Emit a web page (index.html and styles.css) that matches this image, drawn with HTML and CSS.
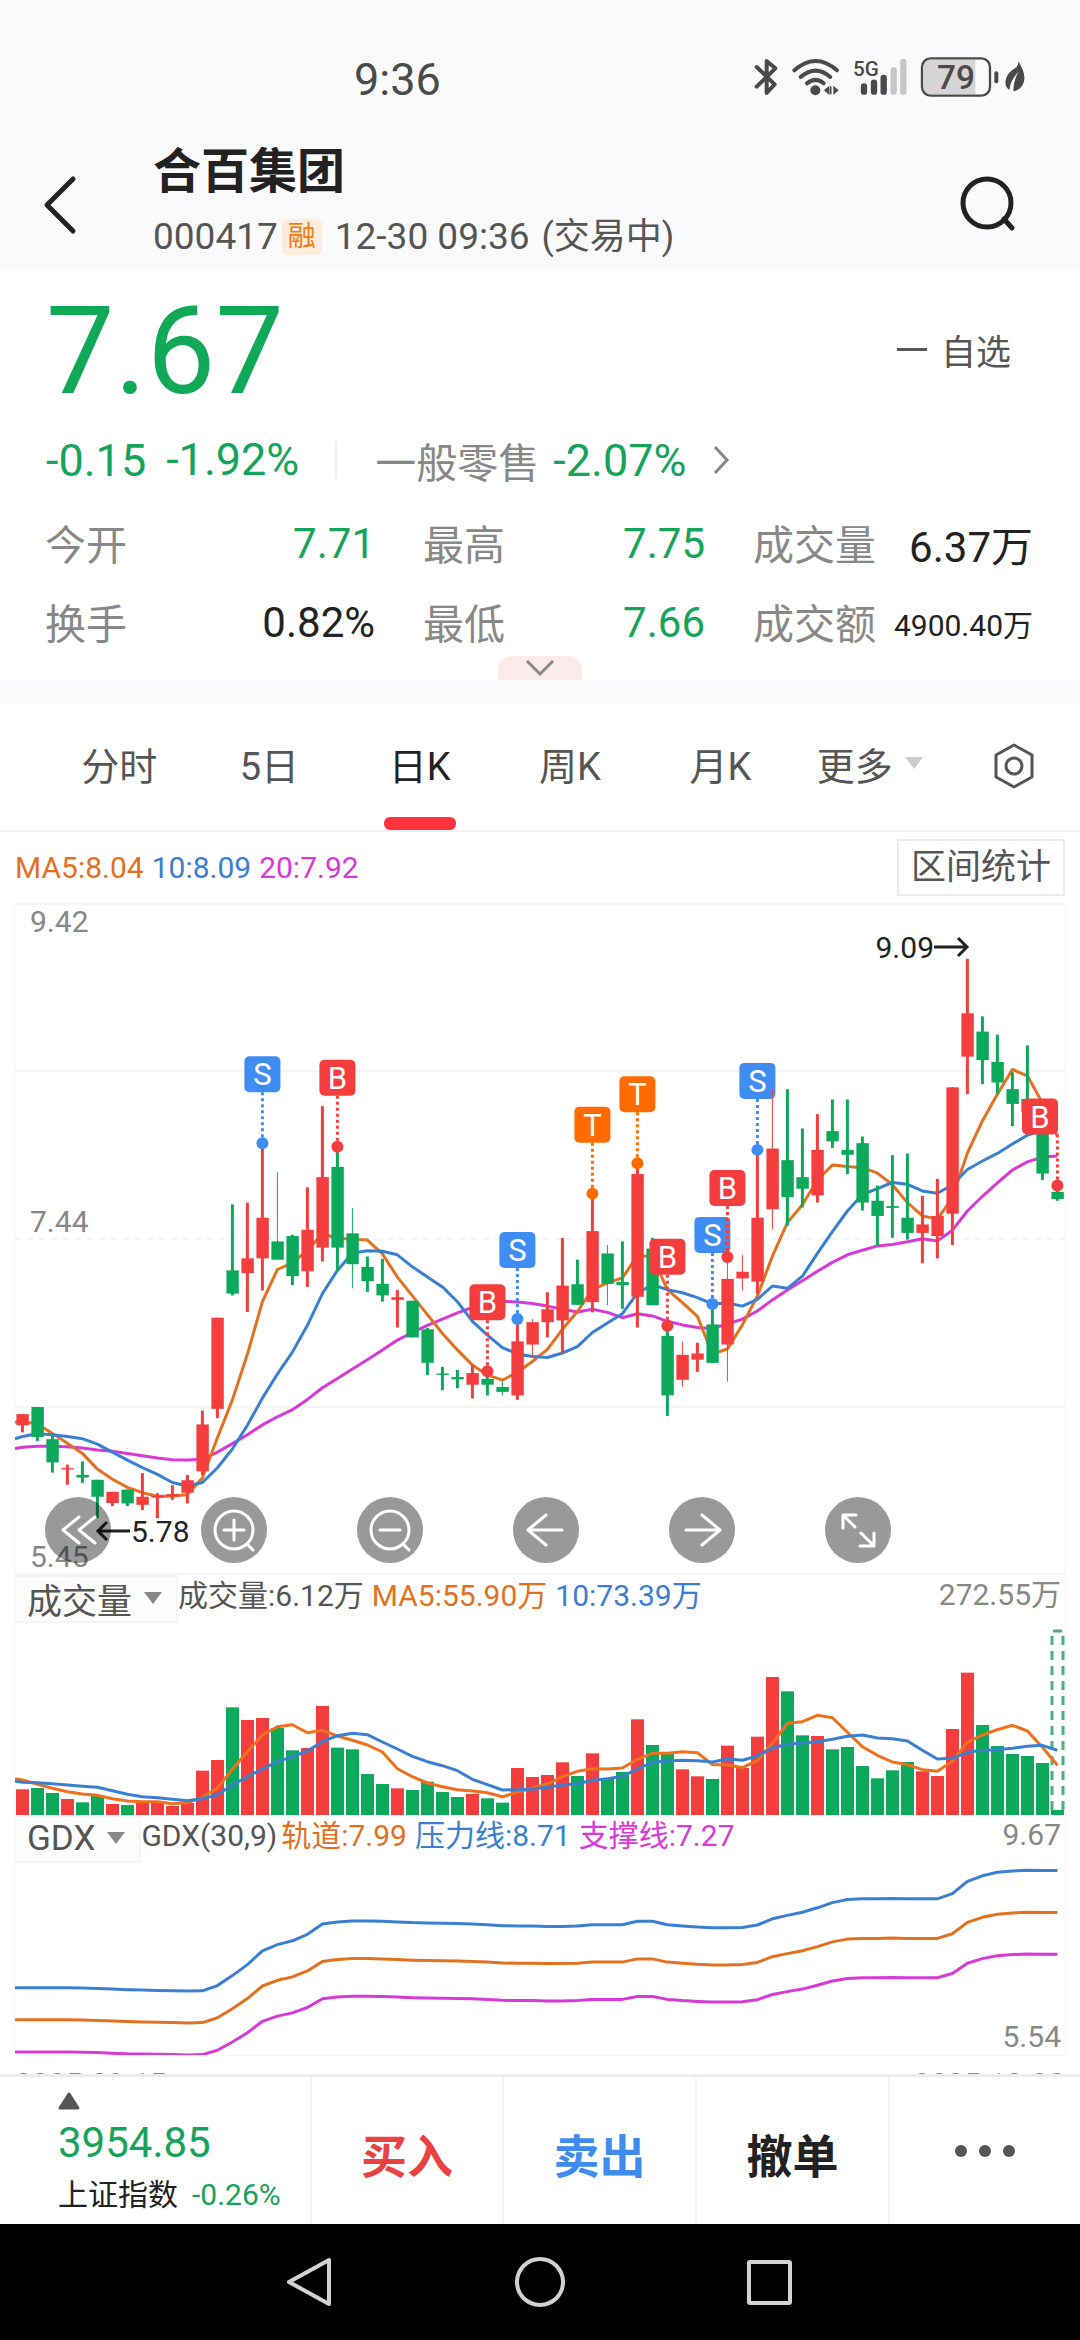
FILE: index.html
```html
<!DOCTYPE html>
<html lang="zh-CN">
<head>
<meta charset="utf-8">
<meta name="viewport" content="width=device-width">
<title>合百集团 000417</title>
<link rel="stylesheet" href="styles.css">
</head>
<body>
<div class="status">
  <span class="clock">9:36</span>
  <svg class="status-icons" viewBox="0 0 900 240" role="img" aria-label="蓝牙 无线 5G 电量">
    <g fill="none" stroke="#4a4a4a" stroke-width="12" stroke-linecap="round" stroke-linejoin="round">
      <path d="M50 84 L104 136 L80 162 V66 L106 88 L50 143"/>
      <path d="M163 94 Q227 38 291 94" /><path d="M182 114 Q227 76 271 114"/><path d="M201 133 Q227 112 251 133"/>
    </g>
    <circle cx="226" cy="154" r="15" fill="#4a4a4a"/>
    <path d="M252 154 L268 140 V168Z M296 154 L280 140 V168Z" fill="#4a4a4a"/>
    <path d="M272 142 V166" stroke="#4a4a4a" stroke-width="5"/>
    <text class="net" x="339" y="111">5G</text>
    <g stroke-width="19" stroke-linecap="round">
      <path stroke="#4a4a4a" d="M372 142 V158 M402 131 V158 M431 117 V158"/>
      <path stroke="#c6c6c8" d="M461 94 V158 M490 69 V158"/>
    </g>
    <path d="M570 62 H706 V166 H570 Q551 166 551 147 V81 Q551 62 570 62Z" fill="#d5d5d6"/>
    <rect x="546" y="58" width="204" height="112" rx="26" fill="none" stroke="#4a4a4a" stroke-width="7"/>
    <path d="M769 103 V127" stroke="#4a4a4a" stroke-width="12" stroke-linecap="round"/>
    <text class="charge" x="648" y="149">79</text>
    <path d="M836 68 Q862 110 849 136 Q840 154 820 157 Q820 125 836 98 Q811 124 808 153 Q794 144 797 123 Q802 100 825 88 Q834 82 836 68Z" fill="#4a4a4a"/>
  </svg>
</div>

<header class="header">
  <button class="icon-btn back" aria-label="返回"><svg viewBox="0 0 36 60" width="36" height="60"><path d="M31 4 L5 30 L31 56" fill="none" stroke="#222" stroke-width="5" stroke-linecap="round" stroke-linejoin="round"/></svg></button>
  <div class="heading">
    <h1>合百集团</h1>
    <p><span>000417</span><span class="tag">融</span><span>12-30 09:36</span><span class="phase">(交易中)</span></p>
  </div>
  <button class="icon-btn" aria-label="搜索"><svg viewBox="0 0 60 60" width="60" height="60"><circle cx="29" cy="28" r="24" fill="none" stroke="#222" stroke-width="5"/><path d="M46 44 L54 53" stroke="#222" stroke-width="5" stroke-linecap="round"/></svg></button>
</header>

<section class="quote">
  <div class="price-row">
    <strong class="price">7.67</strong>
    <button class="watch"><i class="minus"></i>自选</button>
  </div>
  <div class="change-row">
    <span class="down">-0.15</span><span class="down pct">-1.92%</span>
    <a class="sector" href="#sector">一般零售<span class="down">-2.07%</span>
      <svg viewBox="0 0 18 30" width="18" height="30"><path d="M3 2 L15 15 L3 28" fill="none" stroke="#888" stroke-width="3"/></svg></a>
  </div>
  <dl class="stats">
    <div><dt>今开</dt><dd class="down">7.71</dd></div>
    <div><dt>最高</dt><dd class="down">7.75</dd></div>
    <div><dt>成交量</dt><dd>6.37万</dd></div>
    <div><dt>换手</dt><dd>0.82%</dd></div>
    <div><dt>最低</dt><dd class="down">7.66</dd></div>
    <div><dt>成交额</dt><dd class="small">4900.40万</dd></div>
  </dl>
  <button class="expand" aria-label="展开"><svg viewBox="0 0 30 18" width="30" height="18"><path d="M2 2 L15 15 L28 2" fill="none" stroke="#888" stroke-width="3"/></svg></button>
</section>

<nav class="tabs">
  <button>分时</button><button>5日</button><button class="active">日K</button><button>周K</button><button>月K</button>
  <button class="more">更多<i class="caret light"></i></button>
  <button class="gear" aria-label="设置"><svg viewBox="0 0 44 48" width="44" height="48"><path d="M22 3 L40 13 V35 L22 45 L4 35 V13Z" fill="none" stroke="#555" stroke-width="3" stroke-linejoin="round"/><circle cx="22" cy="24" r="8" fill="none" stroke="#555" stroke-width="3"/></svg></button>
</nav>

<main class="charts">
  <div class="ma-row">
    <p class="legend"><span class="orange">MA5:8.04</span><span class="blue">10:8.09</span><span class="pink">20:7.92</span></p>
    <button class="range">区间统计</button>
  </div>
  <div class="panel kline">
    <svg id="kline" viewBox="0 0 1050 672"></svg>
    <div class="tools">
      <button aria-label="快退"><svg viewBox="0 0 66 66"><path d="M34 20 L18 33 L34 46 M50 20 L34 33 L50 46"/></svg></button>
      <button aria-label="放大"><svg viewBox="0 0 66 66"><circle cx="33" cy="33" r="19"/><path d="M23 33 H43 M33 23 V43 M46 47 L52 53"/></svg></button>
      <button aria-label="缩小"><svg viewBox="0 0 66 66"><circle cx="33" cy="33" r="19"/><path d="M23 33 H43 M46 47 L52 53"/></svg></button>
      <button aria-label="左移"><svg viewBox="0 0 66 66"><path d="M49 33 H15 M33 18 L15 33 L33 48"/></svg></button>
      <button aria-label="右移"><svg viewBox="0 0 66 66"><path d="M17 33 H51 M33 18 L51 33 L33 48"/></svg></button>
      <button aria-label="全屏"><svg viewBox="0 0 66 66"><path d="M18 31 V18 H31 M20 20 L30 30 M49 36 V49 H35 M47 47 L36 36"/></svg></button>
    </div>
  </div>
  <div class="panel">
    <div class="panel-head">
      <button class="pick">成交量<i class="caret"></i></button>
      <p class="legend"><span>成交量:6.12万</span><span class="orange">MA5:55.90万</span><span class="blue">10:73.39万</span></p>
      <span class="limit">272.55万</span>
    </div>
    <svg id="volume" viewBox="0 0 1050 192"></svg>
  </div>
  <div class="panel last">
    <div class="panel-head">
      <button class="pick">GDX<i class="caret"></i></button>
      <p class="legend"><span class="name">GDX(30,9)</span><span class="orange">轨道:7.99</span><span class="blue">压力线:8.71</span><span class="pink">支撑线:7.27</span></p>
      <span class="limit">9.67</span>
    </div>
    <svg id="gdx" viewBox="0 0 1050 192"></svg>
  </div>
  <div class="dates"><span>2025-09-15</span><span>2025-12-30</span></div>
</main>

<footer class="actions">
  <a class="index" href="#index">
    <svg viewBox="0 0 22 18" width="22" height="18"><path d="M11 2 L20 16 H2Z" fill="#555" stroke="#555" stroke-width="3" stroke-linejoin="round"/></svg>
    <span class="down points">3954.85</span>
    <span class="index-name">上证指数<span class="down">-0.26%</span></span>
  </a>
  <button class="buy">买入</button>
  <button class="sell">卖出</button>
  <button>撤单</button>
  <button class="dots" aria-label="更多操作"><svg viewBox="0 0 60 14" width="60" height="14" fill="#555"><circle cx="6" cy="7" r="6"/><circle cx="30" cy="7" r="6"/><circle cx="54" cy="7" r="6"/></svg></button>
</footer>

<nav class="system">
  <button aria-label="后退"><svg viewBox="0 0 56 56"><path d="M46 6 V50 L6 28Z"/></svg></button>
  <button aria-label="主屏幕"><svg viewBox="0 0 56 56"><circle cx="28" cy="28" r="23"/></svg></button>
  <button aria-label="最近任务"><svg viewBox="0 0 56 56"><rect x="8" y="8" width="41" height="41" rx="1"/></svg></button>
</nav>
<script src="charts.js"></script>
</body>
</html>
```
FILE: styles.css
```css
* { box-sizing: border-box; }
body {
  margin: 0;
  height: 100vh;
  display: flex;
  flex-direction: column;
  background: #fff;
  color: #222;
  font-family: Roboto, "Noto Sans CJK SC", sans-serif;
}
body > * { flex: none; }
h1, p, dl, dd { margin: 0; }
svg { display: block; }
a { color: inherit; text-decoration: none; }
button {
  border: 0;
  padding: 0;
  background: none;
  color: inherit;
  font: inherit;
}
.down { color: #16a35c; }
.orange { color: #e2721f; }
.blue { color: #3a80d2; }
.pink { color: #d83ad8; }

.status {
  height: 140px;
  padding: 18px 40px 0 354px;
  display: flex;
  align-items: center;
  justify-content: space-between;
  background: #fafafc;
  color: #4a4a4a;
}
.clock { font-size: 45px; }
.status-icons { width: 300px; height: 80px; }
.net { font-size: 62px; font-weight: 500; fill: #4a4a4a; }
.charge { font-size: 100px; font-weight: 500; fill: #4a4a4a; text-anchor: middle; }

.header {
  height: 130px;
  padding: 0 62px 0 42px;
  display: flex;
  align-items: center;
  background: #fafafc;
}
.back { width: 111px; }
.heading { flex: 1; }
.heading h1 { font-size: 48px; line-height: 64px; font-weight: 700; }
.heading p {
  display: flex;
  align-items: center;
  font-size: 37px;
  line-height: 66px;
  color: #555;
}
.tag {
  margin: 0 13px 0 4px;
  width: 40px;
  border-radius: 6px;
  background: #fdebdd;
  color: #ee7c14;
  font-size: 28px;
  line-height: 36px;
  text-align: center;
}
.phase { margin-left: 12px; font-size: 36px; }

.quote {
  height: 410px;
  display: flex;
  flex-direction: column;
  color: #888;
}
.price-row {
  padding: 2px 69px 0 46px;
  display: flex;
  align-items: center;
  justify-content: space-between;
  height: 162px;
}
.price { font-size: 122px; line-height: 160px; font-weight: 400; color: #0fa958; }
.watch { padding-bottom: 6px; display: flex; align-items: center; gap: 14px; font-size: 35px; color: #555; }
.minus { width: 30px; height: 3px; background: #555; }
.change-row {
  height: 56px;
  padding-left: 46px;
  display: flex;
  align-items: center;
  font-size: 45px;
}
.pct { margin-left: 20px; padding-right: 36px; border-right: 2px solid #eee; line-height: 38px; }
.sector { margin-left: 38px; display: flex; align-items: center; font-size: 41px; }
.sector .down { margin: 0 26px 0 14px; font-size: 45px; }
.stats {
  padding: 22px 47px 0 45px;
  display: grid;
  grid-template-columns: 330fr 282fr 280fr;
  column-gap: 48px;
  row-gap: 12px;
  grid-auto-rows: 67px;
}
.stats div { display: flex; align-items: center; justify-content: space-between; }
.stats dt { padding-bottom: 4px; font-size: 41px; }
.stats dd { font-size: 42px; color: #222; }
.stats dd.down { color: #16a35c; }
.stats dd.small { font-size: 30px; }
.expand {
  align-self: center;
  width: 84px;
  height: 24px;
  display: grid;
  place-items: center;
  border-radius: 14px 14px 0 0;
  background: #fcebea;
}

.tabs {
  height: 152px;
  padding: 0 44px;
  display: flex;
  border-top: 24px solid #fafafc;
  border-bottom: 2px solid #f2f2f4;
  color: #555;
  font-size: 38px;
}
.tabs button { flex: 150; padding-bottom: 8px; }
.tabs .active { position: relative; color: #222; }
.tabs .active::after {
  content: "";
  position: absolute;
  left: 50%;
  bottom: 0;
  width: 72px;
  height: 13px;
  margin-left: -36px;
  border-radius: 6px;
  background: #ff333d;
}
.tabs .more { flex: 148; display: flex; align-items: center; justify-content: center; gap: 12px; }
.tabs .gear { flex: 92; padding-bottom: 2px; display: flex; align-items: center; justify-content: flex-end; }
.caret {
  border: 9px solid transparent;
  border-top: 12px solid #888;
  border-bottom: 0;
}
.caret.light { border-top-color: #ccc; }

.charts { flex: 1 1 0; min-height: 0; overflow: hidden; }
.ma-row {
  height: 71px;
  padding: 0 15px;
  display: flex;
  align-items: center;
  justify-content: space-between;
}
.range {
  width: 168px;
  height: 57px;
  border: 2px solid #ebebeb;
  font-size: 35px;
  line-height: 53px;
  color: #555;
}
.legend { display: flex; gap: 8px; font-size: 30px; line-height: 42px; color: #555; white-space: nowrap; }
.legend .name { margin-right: -4px; }
.panel { margin: 0 14px; border: solid #f5f5f5; border-width: 0 1px; }
.panel.last { border-bottom-width: 1px; }
.panel > svg { width: 100%; height: auto; }
.kline { position: relative; }
.tools {
  position: absolute;
  left: 30px;
  bottom: 12px;
  display: flex;
  gap: 90px;
}
.tools button { width: 66px; height: 66px; border-radius: 50%; background: rgba(0, 0, 0, .4); }
.tools svg { fill: none; stroke: #fff; stroke-width: 3; stroke-linecap: round; stroke-linejoin: round; }
.panel-head { height: 48px; display: flex; align-items: flex-start; }
.pick {
  height: 48px;
  padding: 0 14px 2px 12px;
  display: flex;
  align-items: center;
  gap: 12px;
  border: 2px solid #f5f5f5;
  border-left: 0;
  background: #fcfcfc;
  font-size: 35px;
  color: #555;
}
.limit { margin-left: auto; margin-right: 4px; font-size: 30px; line-height: 40px; color: #888; }
.dates {
  padding: 0 15px;
  display: flex;
  justify-content: space-between;
  font-size: 30px;
  line-height: 56px;
  color: #888;
}

/* text inside the charts */
.axis { font-size: 30px; fill: #888; }
.peak { font-size: 30px; fill: #222; }
.mark { font-size: 31px; fill: #fff; text-anchor: middle; }

.actions {
  height: 150px;
  border-top: 3px solid #ededed;
  display: grid;
  grid-template-columns: 310fr 192fr 193fr 193fr 192fr;
  background: #fff;
}
.actions button {
  display: grid;
  place-items: center;
  border-left: 2px solid #f3f3f3;
  padding-top: 4px;
  font-size: 46px;
  font-weight: 700;
}
.actions .buy { color: #e84340; }
.actions .sell { color: #3f8bee; }
.actions .dots { padding-top: 0; }
.index { padding: 15px 0 0 58px; display: flex; flex-direction: column; }
.points { font-size: 42px; line-height: 66px; }
.index-name { display: flex; gap: 14px; font-size: 30px; line-height: 38px; white-space: nowrap; }

.system {
  height: 116px;
  display: flex;
  align-items: center;
  justify-content: center;
  gap: 173px;
  background: #000;
}
.system svg { width: 56px; height: 56px; fill: none; stroke: #d2d2d2; stroke-width: 4; stroke-linejoin: round; }
```
FILE: charts.js
```js
const RED = '#f43e3e', GREEN = '#0da95a', BLUE = '#3f8df2', ORANGE = '#ff6b00';
const LINE = { orange: '#e2721f', blue: '#3a80d2', pink: '#d83ad8' };
const STEP = 15, FIRST = 7.4;
const x = i => FIRST + STEP * i;

// Each candle: colour, body top, body bottom, high, low (chart ticks, 52 = 9.42, 1557 = 5.45).
// A trailing t marks a hairline wick.
const candles = `r 1197 1222 1197 1238|g 1181 1248 1181 1257|g 1253 1305 1243 1328|r 1318 1321 1310 1355|g 1333 1339 1303 1351
g 1344 1382 1344 1430|r 1371 1396 1371 1403|g 1366 1397 1366 1403|r 1382 1400 1329 1412|r 1380 1384 1374 1430
r 1376 1381 1356 1389|r 1345 1373 1333 1397|r 1220 1325 1189 1333|r 981 1185 981 1206|g 875 927 727 931
r 848 881 723 968|r 757 848 590 920|g 810 851 655 851 t|g 798 888 795 908|r 784 877 689 912
r 666 824 507 855|g 643 824 598 877|g 792 861 735 915 t|g 867 899 844 923|g 905 931 849 945
r 935 941 919 1003|g 943 1025 943 1025|g 1007 1082 1004 1109|g 1106 1109 1091 1143|g 1114 1119 1098 1139
r 1105 1131 1086 1162|g 1118 1131 1101 1155|g 1136 1147 1124 1155 t|r 1034 1155 984 1165|r 991 1041 984 1071 t
r 962 991 924 1025|r 909 987 802 1060|g 906 952 851 952|r 787 946 703 969|g 837 905 818 953 t
g 901 908 810 961|r 659 934 635 1003|g 826 953 802 953|g 1022 1155 999 1201|r 1064 1120 1034 1136 t
r 1061 1075 1037 1102|g 996 1082 950 1082|r 894 1041 845 1124 t|r 878 893 840 920 t|r 757 900 605 927
r 602 738 469 783 t|g 628 711 469 775|g 666 692 557 734|r 605 707 525 723|g 563 586 492 601
g 605 616 492 659|g 590 723 575 741|g 719 753 685 819|g 731 735 617 802|g 757 791 613 806
r 772 791 708 859|r 753 798 670 848|r 465 748 465 818|r 299 396 177 480|g 340 404 306 458
g 408 454 347 479|g 469 502 431 552|g 491 520 371 520|g 540 658 540 673|g 699 715 685 719`
  .split(/[|\n]/).map(row => {
    const [c, top, bottom, high, low, thin] = row.trim().split(' ');
    return { color: c === 'r' ? RED : GREEN, top: +top, bottom: +bottom, high: +high, low: +low, wick: thin ? 1 : 3 };
  });

const ma = {
  pink: [1271,1269,1269,1270,1273,1277,1280,1285,1290,1295,1299,1300,1298,1282,1263,1243,1221,1203,1187,1164,1138,1117,1096,1075,1053,1031,1014,998,984,970,958,948,944,946,949,955,962,968,962,969,981,972,977,989,997,1003,1005,995,984,966,941,919,898,877,857,840,830,820,817,811,804,809,785,742,709,679,650,632,621,619],
  orange: [1213,1219,1240,1262,1285,1320,1343,1361,1373,1381,1381,1377,1340,1250,1165,1063,945,873,858,830,793,803,805,807,838,890,932,974,1016,1053,1087,1109,1121,1103,1079,1052,1007,967,918,903,892,842,844,918,947,978,1062,1051,997,932,843,768,728,672,639,642,645,657,683,723,753,760,712,612,540,480,425,439,500,575],
  blue: [1247,1241,1243,1247,1252,1264,1282,1300,1317,1332,1350,1358,1350,1317,1275,1222,1161,1107,1058,998,927,875,836,831,832,840,867,890,912,945,989,1020,1048,1062,1068,1070,1060,1046,1014,993,972,926,907,918,925,936,950,948,955,940,910,915,888,837,788,742,705,692,678,682,697,702,683,649,630,613,592,572,562,557]
};

// Trades: candle index, letter, level of the dot.
const marks = { 16: ['S', 590], 21: ['B', 598], 31: ['B', 1101], 33: ['S', 984], 38: ['T', 703], 41: ['T', 635], 43: ['B', 999], 46: ['S', 950], 47: ['B', 845], 49: ['S', 605], 69: ['B', 685] };
const markColor = { S: BLUE, B: RED, T: ORANGE };

const volumes = [688,684,699,717,727,708,732,735,729,729,738,729,632,600,442,480,474,504,571,564,438,563,568,642,672,685,690,665,696,711,702,715,728,624,651,645,607,648,580,654,636,478,555,581,628,649,657,557,624,530,351,394,526,528,568,561,618,655,631,606,634,648,507,338,495,558,582,588,609,750];
const volumeMa = {
  orange: [660,673,685,695,702,706,716,723,725,725,731,728,712,684,628,575,525,500,494,518,511,528,541,555,576,626,650,669,680,689,693,698,710,697,684,672,650,634,626,627,624,598,580,580,575,578,614,614,623,602,550,490,485,466,473,517,560,586,606,614,629,634,604,547,525,509,496,513,562,616],
  blue: [667,668,671,675,679,682,692,703,710,713,718,722,716,704,675,650,627,605,590,573,545,527,520,524,546,567,589,605,617,632,658,674,690,689,687,682,675,671,661,656,649,627,607,603,601,602,606,597,601,588,563,553,549,545,538,529,525,534,536,543,571,597,595,577,571,569,565,559,556,571]
};

const pressure = [545,545,545,545,546,547,549,551,552,553,554,555,554,539,510,478,438,420,409,390,360,354,351,351,352,354,356,357,358,359,360,362,365,366,366,367,367,366,362,362,362,352,352,362,366,369,371,371,370,363,345,335,326,313,298,289,287,287,286,287,287,287,272,236,220,210,206,204,205,205];

const line = (values, y, color, left) =>
  `<polyline fill="none" stroke="${color}" stroke-width="3" stroke-linejoin="round" points="${left === undefined ? '' : `0,${y(left)} `}${values.map((v, i) => `${x(i)},${y(v).toFixed(1)}`).join(' ')}"/>`;

function drawKline() {
  const y = v => (v - 52) / 2.24;
  let out = '<g stroke="#f5f5f5" stroke-width="2"><path d="M0 1H1050M0 168H1050M0 504H1050M0 671H1050"/><path d="M0 336H1050" stroke-dasharray="6 6"/></g>';
  out += '<text class="axis" x="15" y="29">9.42</text><text class="axis" x="15" y="329">7.44</text><text class="axis" x="15" y="664">5.45</text>';
  out += line(ma.pink, y, LINE.pink, 1274) + line(ma.orange, y, LINE.orange, 1215) + line(ma.blue, y, LINE.blue, 1252);
  candles.forEach((c, i) => {
    const cx = x(i);
    out += `<path d="M${cx} ${y(c.high)}V${y(c.low)}" stroke="${c.color}" stroke-width="${c.wick}"/>`;
    out += `<rect x="${cx - 6}" y="${y(c.top)}" width="12.4" height="${y(c.bottom) - y(c.top)}" fill="${c.color}"/>`;
    if (!marks[i]) return;
    const [letter, level] = marks[i], color = markColor[letter], dot = y(level);
    const bx = Math.min(cx, 1025);
    out += `<path d="M${cx} ${dot - 51}V${dot}" stroke="${color}" stroke-width="3" stroke-dasharray="3 3"/><circle cx="${cx}" cy="${dot}" r="6" fill="${color}"/>`;
    out += `<rect x="${bx - 18}" y="${dot - 87}" width="36" height="36" rx="5" fill="${color}"/><text class="mark" x="${bx}" y="${dot - 58}">${letter}</text>`;
  });
  out += '<g fill="none" stroke="#222" stroke-width="3"><path d="M919 44H952M943 35L952 44L943 53"/><path d="M115 628H83M92 619L83 628L92 637"/></g>';
  out += '<text class="peak" x="919" y="55" text-anchor="end">9.09</text><text class="peak" x="116" y="639">5.78</text>';
  document.getElementById('kline').innerHTML = out;
}

function drawVolume() {
  const y = v => v / 3 - 63;
  let out = '';
  volumes.forEach((v, i) => {
    out += `<rect x="${x(i) - 6.4}" y="${y(v)}" width="13" height="${192 - y(v)}" fill="${candles[i].color}"/>`;
  });
  out += '<path d="M1037 187V8H1048V187" fill="none" stroke="#4fae82" stroke-width="3" stroke-dasharray="9 6"/>';
  out += line(volumeMa.orange, y, '#f0701c', 656) + line(volumeMa.blue, y, LINE.blue, 664);
  document.getElementById('volume').innerHTML = out;
}

function drawGdx() {
  const y = v => v / 2.904 - 63;
  const band = (last, slope) => pressure.map(v => last + (v - 205) * slope);
  document.getElementById('gdx').innerHTML =
    line(band(205, 1), y, LINE.blue, 545) + line(band(327, 0.915), y, LINE.orange, 638) + line(band(448, 0.835), y, LINE.pink, 732) +
    '<text class="axis" x="1046" y="184" text-anchor="end">5.54</text>';
}

drawKline();
drawVolume();
drawGdx();
```
